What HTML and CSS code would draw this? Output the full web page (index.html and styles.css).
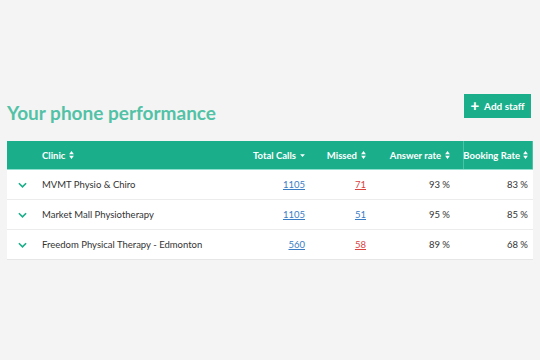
FILE: index.html
```html
<!DOCTYPE html>
<html>
<head>
<meta charset="utf-8">
<link rel="stylesheet" href="styles.css">
</head>
<body>
<div class="page">
  <div class="top">
    <h1 class="title">Your phone performance</h1>
    <button class="btn"><span class="plus">+</span> Add staff</button>
  </div>
  <div class="table">
    <div class="row head">
      <div class="c c1"></div>
      <div class="c c2">Clinic <svg class="sort" viewBox="0 0 6 10"><path d="M3 0L6 4H0Z M3 10L0 6H6Z"/></svg></div>
      <div class="c c3">Total Calls <svg class="sort" viewBox="0 0 6 10"><path d="M0 4H6L3 7.5Z"/></svg></div>
      <div class="c c4">Missed <svg class="sort" viewBox="0 0 6 10"><path d="M3 0L6 4H0Z M3 10L0 6H6Z"/></svg></div>
      <div class="c c5">Answer rate <svg class="sort" viewBox="0 0 6 10"><path d="M3 0L6 4H0Z M3 10L0 6H6Z"/></svg></div>
      <div class="c c6 sel">Booking Rate <svg class="sort" viewBox="0 0 6 10"><path d="M3 0L6 4H0Z M3 10L0 6H6Z"/></svg></div>
    </div>
    <div class="row">
      <div class="c c1"><svg class="chev" viewBox="0 0 10 6"><path d="M1 1L5 5L9 1"/></svg></div>
      <div class="c c2">MVMT Physio &amp; Chiro</div>
      <div class="c c3"><a class="blue">1105</a></div>
      <div class="c c4"><a class="red">71</a></div>
      <div class="c c5">93 %</div>
      <div class="c c6">83 %</div>
    </div>
    <div class="row">
      <div class="c c1"><svg class="chev" viewBox="0 0 10 6"><path d="M1 1L5 5L9 1"/></svg></div>
      <div class="c c2">Market Mall Physiotherapy</div>
      <div class="c c3"><a class="blue">1105</a></div>
      <div class="c c4"><a class="blue">51</a></div>
      <div class="c c5">95 %</div>
      <div class="c c6">85 %</div>
    </div>
    <div class="row">
      <div class="c c1"><svg class="chev" viewBox="0 0 10 6"><path d="M1 1L5 5L9 1"/></svg></div>
      <div class="c c2">Freedom Physical Therapy - Edmonton</div>
      <div class="c c3"><a class="blue">560</a></div>
      <div class="c c4"><a class="red">58</a></div>
      <div class="c c5">89 %</div>
      <div class="c c6">68 %</div>
    </div>
  </div>
</div>
</body>
</html>
```
FILE: styles.css
```css
* { box-sizing: border-box; }
html, body { margin: 0; padding: 0; }
body {
  background: #f4f4f4;
  font-family: "Lato", "Open Sans", sans-serif;
  color: #333;
  width: 540px;
  height: 360px;
}
.page { padding: 94px 7px 0 7px; }
.top {
  display: flex;
  justify-content: space-between;
  align-items: flex-start;
  height: 47px;
  padding-right: 2px;
}
.title {
  margin: 8px 0 0 0;
  font-size: 19px;
  font-weight: 700;
  color: #52c2a6;
  line-height: 22px;
}
.btn {
  border: none;
  background: #1aae8b;
  color: #fff;
  font-family: inherit;
  font-weight: 700;
  font-size: 10px;
  height: 24px;
  width: 67px;
  padding: 0;
  display: flex;
  align-items: center;
  justify-content: center;
  gap: 5px;
}
.plus { font-size: 15px; font-weight: 900; line-height: 1; margin-top: -2px; }
.table {
  width: 526px;
  background: #fff;
  border-bottom: 1px solid #e6e6e6;
}
.row {
  display: grid;
  grid-template-columns: 28px 205px 71px 61px 91px 70px;
  height: 30px;
  border-bottom: 1px solid #ececec;
  font-size: 9.5px;
  align-items: center;
  white-space: nowrap;
}
.row:last-child { border-bottom: none; height: 29px; }
.row.head {
  height: 29px;
  background: #1aae8b;
  color: #fff;
  font-weight: 700;
  border-bottom: 1px solid #8fe0cf;
}
.c { display: flex; align-items: center; height: 100%; }
.c2 { padding-left: 7px; }
.c3, .c4, .c5, .c6 { justify-content: flex-end; }
.c3 { padding-right: 6px; }
.c4 { padding-right: 6px; }
.c5 { padding-right: 13px; }
.c6 { padding-right: 5px; }
.head .c6.sel { border-left: 1px solid #4cc3a7; border-right: 1px solid #4cc3a7; padding-right: 4px; }
.head .c6 .sort { margin-left: 3px; }
.sort { width: 5px; height: 8px; fill: #fff; margin-left: 4px; flex: none; }
.c1 { justify-content: center; padding-left: 3px; }
.chev { width: 9px; height: 6px; fill: none; stroke: #1aae8b; stroke-width: 1.8; }
a { text-decoration: underline; }
.blue { color: #3b7dc4; }
.red { color: #d9443f; }
```
